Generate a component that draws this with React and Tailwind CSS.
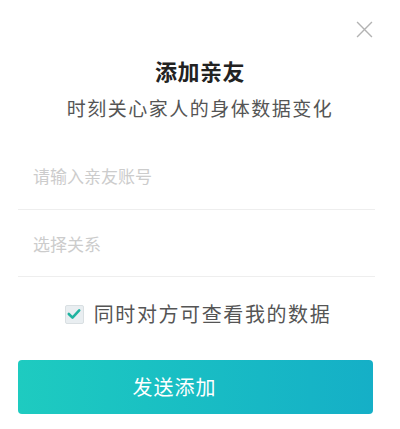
import { useState } from 'react'

const font = { fontFamily: '"Noto Sans CJK SC", "Noto Sans", sans-serif' }

export default function App() {
  const [shareBack, setShareBack] = useState(true)

  return (
    <div className="w-[400px] h-[429px] bg-white relative overflow-hidden" style={font}>
      {/* Close */}
      <button className="absolute left-[356px] top-[21px] w-[17px] h-[17px] text-[#b3b3b3]">
        <svg viewBox="0 0 16 16" width="17" height="17" fill="none" stroke="currentColor" strokeWidth="1.3">
          <path d="M1 1L15 15M15 1L1 15" />
        </svg>
      </button>

      <div className="flex flex-col pt-[53px] px-[18px]">
        {/* Header */}
        <h1 className="text-center text-[22px] leading-[34px] font-bold text-[#222] tracking-[0.5px]">添加亲友</h1>
        <p className="mt-[3px] text-center text-[19px] leading-[36px] text-[#555] tracking-[1.5px]">
          时刻关心家人的身体数据变化
        </p>

        {/* Fields */}
        <div className="mt-[16px] flex flex-col pr-[7px]">
          <input
            className="h-[68px] pl-[15px] border-b border-[#eeeeee] text-[17px] text-[#333] placeholder:text-[#cccccc] outline-none bg-transparent"
            placeholder="请输入亲友账号"
          />
          <input
            className="h-[67px] pl-[15px] border-b border-[#eeeeee] text-[17px] text-[#333] placeholder:text-[#cccccc] outline-none bg-transparent"
            placeholder="选择关系"
          />
        </div>

        {/* Checkbox */}
        <label className="mt-[23px] flex items-center justify-center gap-[10px] pr-[4px] cursor-pointer">
          <span
            onClick={() => setShareBack(!shareBack)}
            className="w-[19px] h-[19px] rounded-[2px] border border-[#d9dfe2] bg-[#e9eef1] flex items-center justify-center"
          >
            {shareBack && (
              <svg viewBox="0 0 16 16" width="16" height="16" fill="none" stroke="#1fb3a0" strokeWidth="2.6" strokeLinecap="round" strokeLinejoin="round">
                <path d="M2.8 8L6.5 11.6L13.2 4.4" />
              </svg>
            )}
          </span>
          <span className="text-[20px] leading-[28px] text-[#555] tracking-[1.6px]">同时对方可查看我的数据</span>
        </label>

        {/* Submit */}
        <button className="mt-[32px] mr-[9px] h-[54px] rounded-[4px] bg-gradient-to-r from-[#1ecbc0] to-[#15afc7] text-white text-[20px] tracking-[1px] pr-[42px]">
          发送添加
        </button>
      </div>
    </div>
  )
}
